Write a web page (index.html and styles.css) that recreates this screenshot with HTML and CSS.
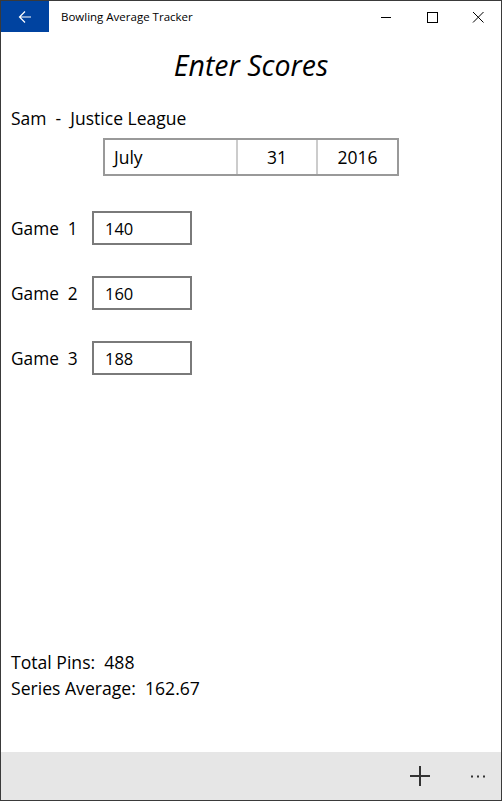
FILE: index.html
```html
<!DOCTYPE html>
<html>
<head>
<meta charset="utf-8">
<link rel="stylesheet" href="styles.css">
</head>
<body>
<div class="window">
  <header class="titlebar">
    <div class="back">
      <svg width="14" height="14" viewBox="0 0 14 14"><path d="M13 7H1.5M7 1.5L1.5 7L7 12.5" fill="none" stroke="#fff" stroke-width="1.2"/></svg>
    </div>
    <div class="apptitle">Bowling Average Tracker</div>
    <div class="caption">
      <div class="cbtn"><svg width="12" height="12" viewBox="0 0 12 12"><path d="M1 6.5H11" stroke="#000" stroke-width="1"/></svg></div>
      <div class="cbtn"><svg width="12" height="12" viewBox="0 0 12 12"><rect x="1.5" y="1.5" width="10" height="10" fill="none" stroke="#000" stroke-width="1"/></svg></div>
      <div class="cbtn"><svg width="12" height="12" viewBox="0 0 12 12"><path d="M1 1L11.5 11.5M11.5 1L1 11.5" stroke="#000" stroke-width="1"/></svg></div>
    </div>
  </header>
  <main class="content">
    <h1 class="heading">Enter Scores</h1>
    <div class="who">Sam&nbsp;&nbsp;-&nbsp;&nbsp;Justice League</div>
    <div class="datepicker">
      <div class="dp-month">July</div>
      <div class="dp-day">31</div>
      <div class="dp-year">2016</div>
    </div>
    <div class="games">
      <div class="game"><span class="glabel">Game&nbsp;&nbsp;1</span><div class="gbox">140</div></div>
      <div class="game"><span class="glabel">Game&nbsp;&nbsp;2</span><div class="gbox">160</div></div>
      <div class="game"><span class="glabel">Game&nbsp;&nbsp;3</span><div class="gbox">188</div></div>
    </div>
    <div class="totals">
      <div class="tline">Total Pins:&nbsp;&nbsp;488</div>
      <div class="tline">Series Average:&nbsp;&nbsp;162.67</div>
    </div>
  </main>
  <footer class="appbar">
    <div class="abtn plus">
      <svg width="20" height="20" viewBox="0 0 20 20"><path d="M10 0V20M0 10H20" stroke="#333" stroke-width="2"/></svg>
    </div>
    <div class="abtn more">
      <svg width="15" height="3" viewBox="0 0 15 3"><rect x="0" y="0.5" width="2" height="2" fill="#333"/><rect x="6" y="0.5" width="2" height="2" fill="#333"/><rect x="12" y="0.5" width="2" height="2" fill="#333"/></svg>
    </div>
  </footer>
</div>
</body>
</html>
```

FILE: styles.css
```css
* { box-sizing: border-box; }
html, body { margin: 0; padding: 0; }
body {
  width: 502px;
  height: 801px;
  font-family: "Open Sans", "Noto Sans", sans-serif;
  color: #000;
  background: #fff;
}
.window {
  width: 502px;
  height: 801px;
  border: 1px solid #3a3a3a;
  display: flex;
  flex-direction: column;
}
.titlebar {
  height: 31px;
  display: flex;
  align-items: center;
  flex: none;
}
.back {
  width: 48px;
  height: 31px;
  background: #0043a0;
  display: flex;
  align-items: center;
  justify-content: center;
}
.apptitle {
  margin-left: 12px;
  font-size: 11.5px;
  flex: 1;
}
.caption { display: flex; height: 31px; }
.cbtn {
  width: 46px;
  height: 31px;
  display: flex;
  align-items: center;
  justify-content: center;
}
.content {
  flex: 1;
  display: flex;
  flex-direction: column;
  padding: 0 10px;
}
.heading {
  margin: 15px 0 0;
  font-size: 28.5px;
  font-style: italic;
  font-weight: 400;
  line-height: 36px;
  text-align: center;
}
.who {
  margin-top: 23px;
  font-size: 17.5px;
  line-height: 24px;
}
.datepicker {
  margin: 8px 0 0 92px;
  width: 296px;
  height: 38px;
  border: 2px solid #999;
  display: flex;
  font-size: 17.5px;
}
.datepicker > div {
  display: flex;
  align-items: center;
}
.dp-month { width: 133px; padding-left: 9px; border-right: 2px solid #ccc; }
.dp-day { width: 80px; justify-content: center; border-right: 2px solid #ccc; }
.dp-year { flex: 1; justify-content: center; }
.games {
  margin-top: 35px;
  display: flex;
  flex-direction: column;
  gap: 31px;
}
.game {
  display: flex;
  align-items: center;
  height: 34px;
}
.glabel {
  width: 81px;
  font-size: 17.3px;
}
.gbox {
  width: 100px;
  height: 34px;
  border: 2px solid #7a7a7a;
  padding-left: 11px;
  font-size: 16.5px;
  display: flex;
  align-items: center;
}
.totals {
  margin-top: auto;
  padding-bottom: 51px;
}
.tline {
  font-size: 17.6px;
  line-height: 26px;
}
.appbar {
  height: 48px;
  background: #e6e6e6;
  display: flex;
  justify-content: flex-end;
  align-items: center;
  flex: none;
}
.abtn {
  height: 48px;
  display: flex;
  align-items: center;
  justify-content: center;
}
.abtn.plus { width: 70px; }
.abtn.more { width: 46px; }
```
